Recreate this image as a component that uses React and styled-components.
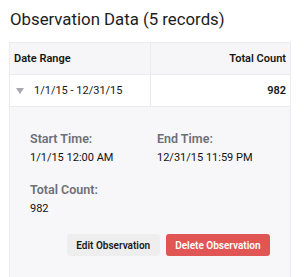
import React from "react";
import styled, { createGlobalStyle } from "styled-components";

const Global = createGlobalStyle`
  html, body { margin: 0; padding: 0; background: #fff; }
  body { font-family: Roboto, "Liberation Sans", sans-serif; color: #1a1a1a; }
  * { box-sizing: border-box; }
`;

const Page = styled.div`
  padding: 9px 0 0 9px;
`;

const Title = styled.h1`
  margin: 0 0 13px 1px;
  font-size: 16.8px;
  font-weight: 400;
  line-height: 20px;
  color: #1c1c1e;
`;

const Table = styled.div`
  width: 282px;
  border: 1px solid #ececf0;
  border-bottom: none;
`;

const Row = styled.div`
  display: grid;
  grid-template-columns: 141px 1fr;
  height: 32px;
  border-bottom: 1px solid #ebebef;
  background: ${(p) => (p.$head ? "#f6f6f8" : "#fff")};
`;

const Cell = styled.div`
  display: flex;
  align-items: center;
  justify-content: ${(p) => (p.$right ? "flex-end" : "flex-start")};
  padding: 0 4px;
  font-size: 11px;
  font-weight: ${(p) => (p.$bold ? 600 : 400)};
  color: #161616;
  white-space: nowrap;
  border-right: ${(p) => (p.$divider ? "1px solid #ebebef" : "none")};
`;

const Caret = styled.span`
  width: 0;
  height: 0;
  border-left: 4px solid transparent;
  border-right: 4px solid transparent;
  border-top: 6px solid #a9a9b0;
  margin: 1px 10px 0 2px;
`;

const Details = styled.div`
  background: #f7f7f9;
  padding: 24px 20px 30px 20px;
`;

const Grid = styled.div`
  display: grid;
  grid-template-columns: 127px 1fr;
  row-gap: 17px;
`;

const Field = styled.div`
  display: flex;
  flex-direction: column;
  gap: 5px;
`;

const Label = styled.div`
  font-size: 12.5px;
  font-weight: 600;
  color: #6e6e76;
  line-height: 15px;
  white-space: nowrap;
`;

const Value = styled.div`
  font-size: 11px;
  color: #111;
  line-height: 14px;
  white-space: nowrap;
`;

const Actions = styled.div`
  display: flex;
  justify-content: flex-end;
  gap: 6px;
  margin-top: 18px;
`;

const Button = styled.button`
  height: 22px;
  padding: 0 9.5px;
  border: none;
  border-radius: 3px;
  font-family: Roboto, "Liberation Sans", sans-serif;
  font-size: 10px;
  font-weight: 600;
  white-space: nowrap;
  background: ${(p) => (p.$danger ? "#e25555" : "#eeeeef")};
  color: ${(p) => (p.$danger ? "#fff" : "#1a1a1a")};
`;

export default function App() {
  return (
    <>
      <Global />
      <Page>
        <Title>Observation Data (5 records)</Title>
        <Table>
          <Row $head>
            <Cell $bold $divider>Date Range</Cell>
            <Cell $bold $right>Total Count</Cell>
          </Row>
          <Row>
            <Cell $divider>
              <Caret />
              1/1/15 - 12/31/15
            </Cell>
            <Cell $bold $right>982</Cell>
          </Row>
          <Details>
            <Grid>
              <Field>
                <Label>Start Time:</Label>
                <Value>1/1/15 12:00 AM</Value>
              </Field>
              <Field>
                <Label>End Time:</Label>
                <Value>12/31/15 11:59 PM</Value>
              </Field>
              <Field>
                <Label>Total Count:</Label>
                <Value>982</Value>
              </Field>
            </Grid>
            <Actions>
              <Button>Edit Observation</Button>
              <Button $danger>Delete Observation</Button>
            </Actions>
          </Details>
        </Table>
      </Page>
    </>
  );
}
